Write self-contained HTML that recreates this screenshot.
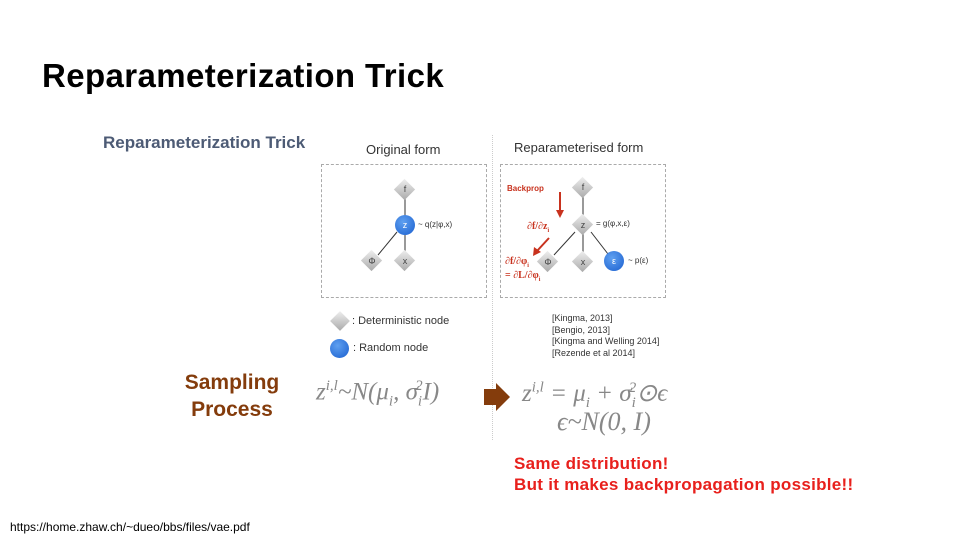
<!DOCTYPE html>
<html><head><meta charset="utf-8"><style>
body{margin:0;width:960px;height:540px;background:#fff;position:relative;overflow:hidden;font-family:"Liberation Sans",sans-serif}
.a{position:absolute;white-space:nowrap}
.dia{position:absolute;width:15px;height:15px;transform:rotate(45deg);background:linear-gradient(135deg,#eee,#aaa);}
.dl{position:absolute;font-size:9px;color:#444;width:20px;text-align:center}
.circ{position:absolute;width:20px;height:20px;border-radius:50%;background:radial-gradient(circle at 40% 35%,#5fa0f0,#1a5fcf)}
.m{font-family:"Liberation Serif",serif;font-style:italic;color:#888;font-size:25px}
</style></head><body>
<div class="a" style="left:42px;top:57px;font-size:33px;font-weight:bold;color:#000;letter-spacing:0.4px">Reparameterization Trick</div>
<div class="a" style="left:103px;top:133px;font-size:17px;font-weight:bold;color:#4d5b75">Reparameterization Trick</div>
<div class="a" style="left:366px;top:142px;font-size:13px;color:#333">Original form</div>
<div class="a" style="left:514px;top:140px;font-size:13px;color:#333">Reparameterised form</div>
<div class="a" style="left:492px;top:135px;height:305px;border-left:1px dotted #ccc"></div>
<div class="a" style="left:321px;top:164px;width:164px;height:132px;border:1px dashed #aaa"></div>
<div class="a" style="left:500px;top:164px;width:164px;height:132px;border:1px dashed #aaa"></div>
<svg class="a" style="left:0;top:0" width="960" height="540">
<g stroke="#333" stroke-width="1" fill="none">
<line x1="405" y1="216" x2="405" y2="199"/><line x1="405" y1="253" x2="405" y2="234"/><line x1="378" y1="255" x2="397" y2="232"/>
<line x1="583" y1="216" x2="583" y2="197"/><line x1="583" y1="253" x2="583" y2="234"/><line x1="554" y1="255" x2="575" y2="232"/><line x1="608" y1="254" x2="591" y2="232"/>
</g>
<g stroke="#c8321e" stroke-width="2" fill="#c8321e">
<line x1="560" y1="192" x2="560" y2="212"/><polygon points="556,210 564,210 560,218" stroke="none"/>
<line x1="549" y1="238" x2="537" y2="251"/><polygon points="533,256 534,247 541,252" stroke="none"/>
</g>
</svg>
<div class="dia" style="left:397px;top:182px"></div><div class="dl" style="left:395px;top:184px">f</div>
<div class="circ" style="left:395px;top:215px"></div><div class="dl" style="left:395px;top:220px;color:#fff">z</div>
<div class="dia" style="left:364px;top:253px"></div><div class="dl" style="left:362px;top:256px">Φ</div>
<div class="dia" style="left:397px;top:253px"></div><div class="dl" style="left:395px;top:256px">x</div>
<div class="a" style="left:418px;top:220px;font-size:8px;color:#333">~ q(z|φ,x)</div>
<div class="dia" style="left:575px;top:180px"></div><div class="dl" style="left:573px;top:182px">f</div>
<div class="dia" style="left:575px;top:217px"></div><div class="dl" style="left:573px;top:220px">z</div>
<div class="dia" style="left:540px;top:254px"></div><div class="dl" style="left:538px;top:257px">Φ</div>
<div class="dia" style="left:575px;top:254px"></div><div class="dl" style="left:573px;top:257px">x</div>
<div class="circ" style="left:604px;top:251px"></div><div class="dl" style="left:604px;top:256px;color:#fff">ε</div>
<div class="a" style="left:596px;top:219px;font-size:8px;color:#333">= g(φ,x,ε)</div>
<div class="a" style="left:628px;top:256px;font-size:8px;color:#333">~ p(ε)</div>
<div class="a" style="left:507px;top:184px;font-size:8px;font-weight:bold;color:#c8321e">Backprop</div>
<div class="a" style="left:527px;top:221px;font-size:10px;color:#c8321e;font-family:'Liberation Serif',serif;font-weight:bold">∂f/∂z<sub style="font-size:6px">i</sub></div>
<div class="a" style="left:505px;top:256px;font-size:10px;color:#c8321e;font-family:'Liberation Serif',serif;font-weight:bold">∂f/∂φ<sub style="font-size:6px">i</sub></div>
<div class="a" style="left:505px;top:270px;font-size:10px;color:#c8321e;font-family:'Liberation Serif',serif;font-weight:bold">= ∂L/∂φ<sub style="font-size:6px">i</sub></div>
<div class="dia" style="left:333px;top:314px;width:14px;height:14px"></div>
<div class="a" style="left:352px;top:315px;font-size:11px;color:#333">: Deterministic node</div>
<div class="circ" style="left:330px;top:339px;width:19px;height:19px"></div>
<div class="a" style="left:353px;top:342px;font-size:11px;color:#333">: Random node</div>
<div class="a" style="left:552px;top:313px;font-size:9px;color:#333;line-height:11.7px">[Kingma, 2013]<br>[Bengio, 2013]<br>[Kingma and Welling 2014]<br>[Rezende et al 2014]</div>
<div class="a" style="left:177px;top:369px;font-size:21px;font-weight:bold;color:#843c0c;text-align:center;line-height:27px;width:110px">Sampling<br>Process</div>
<div class="a m" style="left:316px;top:378px">z<sup style="font-size:15px">i,l</sup>~N(μ<sub style="font-size:15px">i</sub>, σ<sub style="font-size:15px">i</sub><sup style="font-size:15px;margin-left:-7px">2</sup>I)</div>
<svg class="a" style="left:484px;top:383px" width="28" height="28"><polygon points="0,6 12,6 12,0 26,14 12,28 12,22 0,22" fill="#843c0c"/></svg>
<div class="a m" style="left:522px;top:378px">z<sup style="font-size:15px">i,l</sup> = μ<sub style="font-size:15px">i</sub> + σ<sub style="font-size:15px">i</sub><sup style="font-size:15px;margin-left:-7px">2</sup>⊙ϵ</div>
<div class="a m" style="left:557px;top:407px;font-size:26px">ϵ~N(0, I)</div>
<div class="a" style="left:514px;top:453px;font-size:17px;font-weight:bold;color:#e8201c;line-height:21px;letter-spacing:0.3px">Same distribution!<br>But it makes backpropagation possible!!</div>
<div class="a" style="left:10px;top:520px;font-size:12px;color:#000">https://home.zhaw.ch/~dueo/bbs/files/vae.pdf</div>
</body></html>
